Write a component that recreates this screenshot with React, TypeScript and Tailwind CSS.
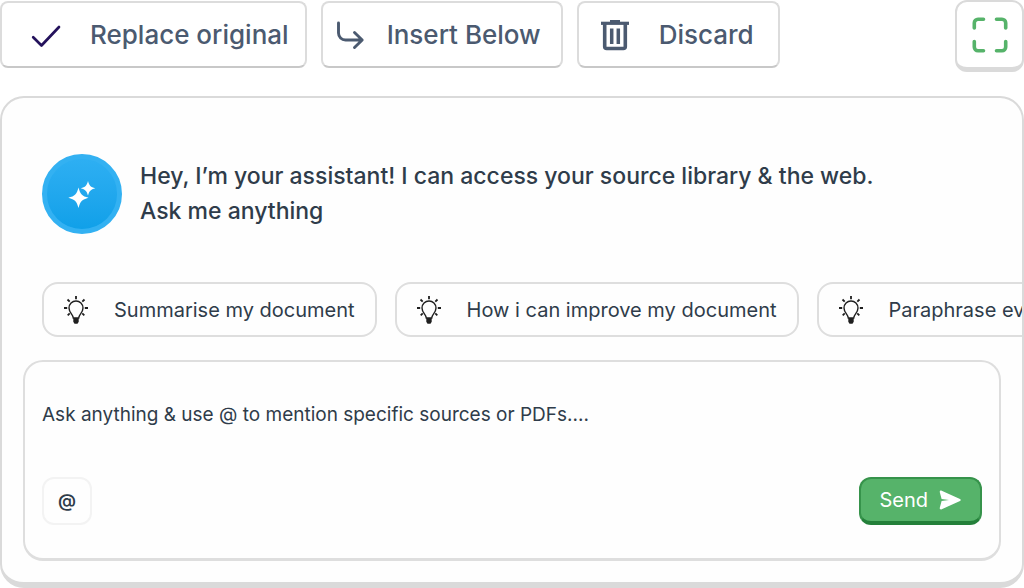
import { useState } from "react";

const CheckIcon = () => (
  <svg className="h-8 w-8" viewBox="0 0 32 32" fill="none" stroke="#24125c" strokeWidth="2.7" strokeLinecap="round" strokeLinejoin="round">
    <path d="M3.2 18.2 11.500 26.500 29 8" />
  </svg>
);

const InsertIcon = () => (
  <svg className="h-8 w-8" viewBox="0 0 32 32" fill="none" stroke="#4b5a70" strokeWidth="2.9" strokeLinecap="round" strokeLinejoin="round">
    <path d="M3.500 4v10a7 7 0 0 0 7 7h16.500M19.500 13.500l7.700 7.500-7.700 7.500" />
  </svg>
);

const TrashIcon = () => (
  <svg className="h-8 w-8" viewBox="0 0 32 32" fill="none" stroke="#4b5a70">
    <path d="M2 4.300h28" strokeWidth="3.200" />
    <path d="M11 2.500h10" strokeWidth="3" />
    <path d="M5.700 5v22.500a2 2 0 0 0 2 2h16.600a2 2 0 0 0 2-2V5" strokeWidth="3.600" />
    <path d="M12.700 9.500v15.500M19.300 9.500v15.500" strokeWidth="3.500" />
  </svg>
);

const ExpandIcon = () => (
  <svg className="h-9 w-9" viewBox="0 0 36 36" fill="none" stroke="#56b36a" strokeWidth="3.6" strokeLinecap="round" strokeLinejoin="round">
    <path d="M2.300 11V6a3.700 3.700 0 0 1 3.700-3.700h5.500M24.500 2.300H30A3.700 3.700 0 0 1 33.700 6v5M33.700 24.500V30a3.700 3.700 0 0 1-3.700 3.700h-5.500M11.500 33.700H6A3.700 3.700 0 0 1 2.300 30v-5.500" />
  </svg>
);

const SparkleIcon = () => (
  <svg className="h-7 w-7" viewBox="0 0 28 28" fill="white">
    <path d="M10.500 7.500C12.300 14.300 14 16 20.500 17.800 14 19.600 12.300 21.300 10.500 28 8.700 21.300 7 19.600.3 17.800 7 16 8.700 14.300 10.500 7.500Z" />
    <path d="M20 1C21.400 5.800 22.500 6.900 27.300 8.300 22.500 9.700 21.400 10.800 20 15.600 18.600 10.800 17.500 9.700 12.700 8.300 17.500 6.900 18.600 5.800 20 1Z" />
  </svg>
);

const BulbIcon = () => (
  <svg className="h-7 w-6 shrink-0" viewBox="0 0 24 28" fill="none" stroke="#1f1f1f" strokeWidth="1.400">
    <path d="M9.300 22C9.300 18.500 5 16.800 5 12a7 7 0 0 1 14 0c0 4.800-4.300 6.500-4.300 10Z" />
    <path d="M12 0v3.200M0 12h3.200M20.800 12H24M3.500 3.500l2.200 2.200M20.500 3.500l-2.200 2.200M3.700 19.300l2-2M20.300 19.300l-2-2" strokeWidth="1.800" />
    <path d="M9.300 22h5.400v3.800l-1.200 2h-3l-1.200-2Z" fill="#1f1f1f" stroke="none" />
  </svg>
);

const SendIcon = () => (
  <svg className="h-5 w-6" viewBox="0 0 24 20" fill="white">
    <path d="M1.800 2.200C1.500.9 2.500.3 3.700.8L22 9c1 .5 1 1.500 0 2L3.700 19.200c-1.200.5-2.200-.1-1.900-1.400L3.600 11l7.400-1-7.400-1Z" />
  </svg>
);

const actions = [
  { label: "Replace original", icon: <CheckIcon />, style: "gap-7 pl-7 pr-4" },
  { label: "Insert Below", icon: <InsertIcon />, style: "gap-5 pl-3 pr-5" },
  { label: "Discard", icon: <TrashIcon />, style: "gap-7 pl-5 pr-6" },
];

const suggestions = [
  "Summarise my document",
  "How i can improve my document",
  "Paraphrase everything",
];

const App = () => {
  const [message, setMessage] = useState("");

  return (
    <main className="bg-white font-['Inter',sans-serif] text-[#2f3c4a]">
      {/* toolbar */}
      <div className="flex items-start justify-between">
        <div className="flex gap-3.5 pt-px">
          {actions.map((action) => (
            <button
              key={action.label}
              type="button"
              className={`flex h-[67px] items-center rounded-lg border-2 border-[#dcdcdc] border-b-[#c8c8c8] text-[26px] font-medium whitespace-nowrap text-[#4b5a70] ${action.style}`}
            >
              {action.icon}
              {action.label}
            </button>
          ))}
        </div>
        <button
          type="button"
          aria-label="Full screen"
          className="flex h-[72px] w-[69px] items-center justify-center rounded-xl border-2 border-b-5 border-[#dadada]"
        >
          <ExpandIcon />
        </button>
      </div>

      {/* assistant panel */}
      <section className="mt-6 rounded-3xl border-2 border-b-6 border-[#dadada] bg-[#fefefe] pt-14 pb-[21px]">
        <div className="flex items-center gap-[18px] px-10">
          <div className="flex h-20 w-20 shrink-0 items-center justify-center rounded-full border-5 border-[#33b1f2] bg-linear-to-b from-[#2fb0f3] to-[#0c9fe8] bg-origin-border">
            <SparkleIcon />
          </div>
          <p className="text-[23px] leading-[35px] font-medium">
            Hey, I’m your assistant! I can access your source library &amp; the web.
            <br />
            Ask me anything
          </p>
        </div>

        <div className="mt-12 flex gap-[18px] overflow-hidden pl-10">
          {suggestions.map((text) => (
            <button
              key={text}
              type="button"
              onClick={() => setMessage(text)}
              className="flex h-[55px] shrink-0 items-center gap-[26px] rounded-2xl border-2 border-[#dedede] pr-5 pl-5 text-xl whitespace-nowrap"
            >
              <BulbIcon />
              {text}
            </button>
          ))}
        </div>

        {/* message box */}
        <form
          onSubmit={(e) => e.preventDefault()}
          className="mx-[21px] mt-[23px] rounded-[20px] border-2 border-b-3 border-[#dedede] px-[17px] pt-[39px] pb-[33px]"
        >
          <textarea
            rows={1}
            aria-label="Message"
            value={message}
            onChange={(e) => setMessage(e.target.value)}
            placeholder="Ask anything & use @ to mention specific sources or PDFs...."
            className="block h-7 w-full resize-none overflow-hidden text-[19px] leading-7 outline-none placeholder:text-[#2f3c4a]"
          />
          <div className="mt-12 flex items-center justify-between">
            <button
              type="button"
              aria-label="Mention a source"
              className="h-12 w-[50px] rounded-xl border-2 border-[#f3f3f3] text-lg font-semibold"
            >
              @
            </button>
            <button
              type="submit"
              className="flex h-12 items-center gap-2.5 rounded-xl border-2 border-b-4 border-[#36934b] border-b-[#24803a] bg-[#56b36a] px-[18px] text-xl text-white"
            >
              Send
              <SendIcon />
            </button>
          </div>
        </form>
      </section>
    </main>
  );
};

export default App;
